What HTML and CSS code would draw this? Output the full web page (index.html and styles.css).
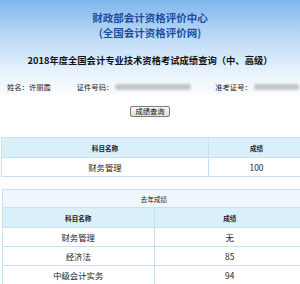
FILE: index.html
```html
<!DOCTYPE html>
<html lang="zh-CN">
<head>
<meta charset="utf-8">
<title>成绩查询</title>
<link rel="stylesheet" href="styles.css">
</head>
<body>
<div class="page">
  <header class="top">
    <div class="org">财政部会计资格评价中心</div>
    <div class="org">(全国会计资格评价网)</div>
    <h1 class="title">2018年度全国会计专业技术资格考试成绩查询（中、高级）</h1>
  </header>
  <div class="info">
    <span class="field f-name">姓名：许丽霞</span>
    <span class="field f-id">证件号码：<span class="blur b1"></span></span>
    <span class="field f-no">准考证号：<span class="blur b2"></span></span>
  </div>
  <div class="btnrow"><button class="btn">成绩查询</button></div>

  <table class="grid t1">
    <tr class="head"><th class="c1">科目名称</th><th>成绩</th></tr>
    <tr><td class="c1">财务管理</td><td>100</td></tr>
  </table>

  <table class="grid t2">
    <tr class="cap"><th colspan="2">去年成绩</th></tr>
    <tr class="head"><th class="c1">科目名称</th><th>成绩</th></tr>
    <tr><td class="c1">财务管理</td><td>无</td></tr>
    <tr><td class="c1">经济法</td><td>85</td></tr>
    <tr><td class="c1">中级会计实务</td><td>94</td></tr>
  </table>
</div>
</body>
</html>
```
FILE: styles.css
```css
html, body {
  margin: 0;
  padding: 0;
  background: #fff;
  overflow: hidden;
}
body {
  font-family: "Noto Sans CJK SC", "Noto Sans", sans-serif;
  color: #222;
  width: 300px;
  height: 284px;
}
.page {
  background: linear-gradient(to bottom, #80b6ec 0px, #b9d8f6 35px, #e6f1fc 70px, #ffffff 100px);
  min-height: 284px;
}
.top {
  padding-top: 10px;
  text-align: center;
}
.org {
  color: #1f4d9e;
  font-size: 10.5px;
  font-weight: bold;
  line-height: 15px;
}
.title {
  margin: 13px 0 0;
  font-size: 9.3px;
  font-weight: bold;
  line-height: 14px;
  color: #111;
  white-space: nowrap;
}
.info {
  margin-top: 14px;
  display: flex;
  align-items: center;
  height: 12px;
  font-size: 7.3px;
  color: #222;
}
.field {
  display: flex;
  align-items: center;
  white-space: nowrap;
}
.f-name { margin-left: 7px; }
.f-id { margin-left: 26px; }
.f-no { margin-left: 24px; }
.blur {
  display: inline-block;
  height: 6px;
  background: #c4c4c4;
  border-radius: 3px;
  filter: blur(0.8px);
  margin-left: 2px;
}
.b1 { width: 76px; }
.b2 { width: 45px; }
.btnrow {
  margin-top: 13px;
  display: flex;
  justify-content: center;
}
.btn {
  width: 40px;
  height: 11px;
  padding: 0;
  font-family: inherit;
  font-size: 7.3px;
  line-height: 9px;
  color: #111;
  background: linear-gradient(#fbfbfb, #dcdcdc);
  border: 1px solid #7c7c7c;
  border-radius: 2px;
}
.grid {
  border-collapse: collapse;
  table-layout: fixed;
}
.grid th, .grid td {
  border: 1px solid #c6e2f2;
  text-align: center;
  padding: 0;
  white-space: nowrap;
}
.grid th {
  font-size: 6.6px;
  font-weight: bold;
  color: #222;
}
.grid td {
  font-size: 8.4px;
  color: #222;
  height: 18px;
  background: #fff;
}
.head th {
  background: #d9effa;
  height: 19px;
}
.cap th {
  background: #eff7fd;
  height: 17px;
  font-weight: normal;
}
.t1 {
  margin: 20px 0 0 1px;
  width: 304px;
}
.t1 .c1 { width: 206px; }
.t2 {
  margin: 12px 0 0 2px;
  width: 304px;
}
.t2 .c1 { width: 230px; }
```
